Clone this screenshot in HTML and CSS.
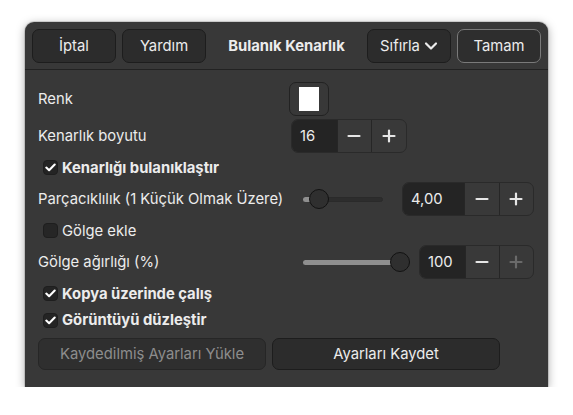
FILE: index.html
```html
<!DOCTYPE html>
<html lang="tr">
<head>
<meta charset="utf-8">
<title>Bulanık Kenarlık</title>
<link rel="stylesheet" href="styles.css">
</head>
<body>
<div class="window">
  <header class="headerbar">
    <div class="hgroup">
      <button class="btn hbtn">İptal</button>
      <button class="btn hbtn">Yardım</button>
    </div>
    <div class="title">Bulanık Kenarlık</div>
    <div class="hgroup">
      <button class="btn hbtn">Sıfırla <svg class="chev" width="14" height="10" viewBox="0 0 14 10"><path d="M2 2.5 L7 7.5 L12 2.5" fill="none" stroke="#ececec" stroke-width="2.2" stroke-linecap="round" stroke-linejoin="round"/></svg></button>
      <button class="btn hbtn default">Tamam</button>
    </div>
  </header>
  <main class="content">
    <div class="row r-color">
      <span class="label lbl-a">Renk</span>
      <button class="colorbtn"><span class="swatch"></span></button>
    </div>
    <div class="row r-size">
      <span class="label lbl-b">Kenarlık boyutu</span>
      <div class="spin spin-16">
        <span class="entry e-16">16</span>
        <span class="sbtn"><svg width="14" height="14" viewBox="0 0 14 14"><path d="M1.5 7 H12.5" stroke="#e6e6e6" stroke-width="2.2" stroke-linecap="round"/></svg></span>
        <span class="sbtn"><svg width="14" height="14" viewBox="0 0 14 14"><path d="M1.5 7 H12.5 M7 1.5 V12.5" stroke="#e6e6e6" stroke-width="2.2" stroke-linecap="round"/></svg></span>
      </div>
    </div>
    <label class="row check-row r-check1">
      <span class="check on"><svg width="11" height="9" viewBox="0 0 11 9"><path d="M1.3 4.6 L4.1 7.2 L9.7 1.6" fill="none" stroke="#fff" stroke-width="2.1" stroke-linecap="round" stroke-linejoin="round"/></svg></span>
      <span class="bold">Kenarlığı bulanıklaştır</span>
    </label>
    <div class="row r-grain">
      <span class="label lbl-c">Parçacıklılık (1 Küçük Olmak Üzere)</span>
      <div class="slider s-grain">
        <span class="track"></span>
        <span class="fill f-grain"></span>
        <span class="knob k-grain"></span>
      </div>
      <div class="spin spin-400">
        <span class="entry e-400">4,00</span>
        <span class="sbtn"><svg width="14" height="14" viewBox="0 0 14 14"><path d="M1.5 7 H12.5" stroke="#e6e6e6" stroke-width="2.2" stroke-linecap="round"/></svg></span>
        <span class="sbtn"><svg width="14" height="14" viewBox="0 0 14 14"><path d="M1.5 7 H12.5 M7 1.5 V12.5" stroke="#e6e6e6" stroke-width="2.2" stroke-linecap="round"/></svg></span>
      </div>
    </div>
    <label class="row check-row r-check2">
      <span class="check"></span>
      <span>Gölge ekle</span>
    </label>
    <div class="row r-weight">
      <span class="label lbl-c">Gölge ağırlığı (%)</span>
      <div class="slider s-weight">
        <span class="track"></span>
        <span class="fill f-weight"></span>
        <span class="knob k-weight"></span>
      </div>
      <div class="spin spin-100">
        <span class="entry e-100">100</span>
        <span class="sbtn"><svg width="14" height="14" viewBox="0 0 14 14"><path d="M1.5 7 H12.5" stroke="#e6e6e6" stroke-width="2.2" stroke-linecap="round"/></svg></span>
        <span class="sbtn disabled"><svg width="14" height="14" viewBox="0 0 14 14"><path d="M1.5 7 H12.5 M7 1.5 V12.5" stroke="#6a6a6a" stroke-width="2.2" stroke-linecap="round"/></svg></span>
      </div>
    </div>
    <label class="row check-row r-check3">
      <span class="check on"><svg width="11" height="9" viewBox="0 0 11 9"><path d="M1.3 4.6 L4.1 7.2 L9.7 1.6" fill="none" stroke="#fff" stroke-width="2.1" stroke-linecap="round" stroke-linejoin="round"/></svg></span>
      <span class="bold">Kopya üzerinde çalış</span>
    </label>
    <label class="row check-row r-check4">
      <span class="check on"><svg width="11" height="9" viewBox="0 0 11 9"><path d="M1.3 4.6 L4.1 7.2 L9.7 1.6" fill="none" stroke="#fff" stroke-width="2.1" stroke-linecap="round" stroke-linejoin="round"/></svg></span>
      <span class="bold">Görüntüyü düzleştir</span>
    </label>
    <div class="row r-buttons">
      <button class="btn wide" disabled>Kaydedilmiş Ayarları Yükle</button>
      <button class="btn wide">Ayarları Kaydet</button>
    </div>
  </main>
</div>
</body>
</html>
```

FILE: styles.css
```css
* { box-sizing: border-box; }
html, body { margin: 0; padding: 0; background: #ffffff; }
body {
  font-family: Inter, "Noto Sans", "Liberation Sans", sans-serif;
  font-size: 14.8px;
  color: #ececec;
  padding: 22px 0 0 25px;
}
.window {
  width: 523px;
  height: 365px;
  background: #383838;
  border-radius: 9px 9px 0 0;
  box-shadow: 0 2px 10px rgba(0,0,0,0.35), 0 0 0 1px rgba(0,0,0,0.12);
  display: flex;
  flex-direction: column;
}
.headerbar {
  height: 48px;
  flex: none;
  display: flex;
  align-items: center;
  padding: 0 7px;
  border-bottom: 1px solid #222222;
}
.hgroup { display: flex; gap: 6px; }
.title {
  flex: 1;
  text-align: center;
  font-weight: 700;
  font-size: 14.8px;
}
.btn {
  font-family: inherit;
  font-size: 14.8px;
  color: #ececec;
  background: #2c2c2c;
  border: 1px solid #1d1d1d;
  border-radius: 7px;
  padding: 0;
  display: flex;
  align-items: center;
  justify-content: center;
}
.hbtn { width: 84px; height: 34px; }
.hbtn.default { border-color: #7a7a7a; background: #2e2e2e; }
.chev { margin-left: 4px; }
.content {
  flex: 1;
  padding: 12px 14px 0 13px;
  display: flex;
  flex-direction: column;
}
.row { display: flex; align-items: center; }
.label { flex: none; }
.lbl-a { width: 251px; }
.lbl-b { width: 253px; }
.lbl-c { width: 265px; }
.r-color { height: 34px; }
.r-size { height: 34px; margin-top: 3px; }
.r-check1 { height: 29px; }
.r-grain { height: 34px; }
.r-check2 { height: 29px; }
.r-weight { height: 34px; }
.r-check3 { height: 29px; }
.r-check4 { height: 24px; }
.r-buttons { height: 32px; margin-top: 6px; gap: 6px; }
.colorbtn {
  width: 40px; height: 34px;
  background: #383838;
  border: 1px solid #222222;
  border-radius: 7px;
  display: flex; align-items: center; justify-content: center;
  padding: 0;
}
.swatch { width: 20px; height: 24px; background: #ffffff; display: block; }
.spin {
  display: flex;
  height: 34px;
  border: 1px solid #2a2a2a;
  border-radius: 7px;
  overflow: hidden;
  background: #393939;
}
.entry {
  background: #242424;
  display: flex; align-items: center;
  padding-left: 8px;
  color: #ececec;
}
.e-16 { width: 45px; }
.e-400 { width: 62px; }
.e-100 { width: 46px; padding-left: 8px; }
.sbtn {
  width: 35px;
  display: flex; align-items: center; justify-content: center;
  border-left: 1px solid #262626;
}
.spin-16 { width: 116px; }
.spin-400 { width: 132px; margin-left: 19px; }
.spin-100 { width: 115px; margin-left: 9px; }
.slider { position: relative; height: 34px; flex: none; }
.s-grain { width: 80px; }
.s-weight { width: 107px; }
.track {
  position: absolute; left: 0; right: 0; top: 15px; height: 5px;
  background: #2d2d2d; border-radius: 3px;
  border: 1px solid #2a2a2a;
}
.fill {
  position: absolute; left: 0; top: 15px; height: 5px;
  background: #8f8f8f; border-radius: 3px;
}
.f-grain { width: 14px; }
.f-weight { width: 96px; }
.knob {
  position: absolute; top: 7px; width: 20px; height: 20px;
  border-radius: 50%;
  background: #2f2f2f;
  border: 1px solid #121212;
}
.k-grain { left: 6px; }
.k-weight { left: 87px; }
.check-row { padding-left: 5px; }
.check {
  width: 15px; height: 15px;
  background: #262626;
  border: 1px solid #1e1e1e;
  border-radius: 4px;
  display: flex; align-items: center; justify-content: center;
  margin-right: 4px;
  flex: none;
}
.check.on { background: #242424; }
.bold { font-weight: 700; }
.wide { width: 228px; height: 32px; }
.wide:disabled { color: #8d8d8d; background: #2f2f2f; border-color: #262626; }
```
